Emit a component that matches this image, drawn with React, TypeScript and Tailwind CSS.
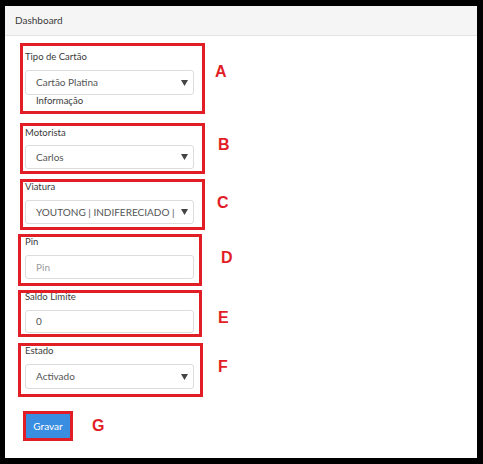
import React from "react";

const Arrow = () => (
  <svg width="7" height="6" viewBox="0 0 7 6" className="shrink-0">
    <path d="M0 0 H7 L3.5 6 Z" fill="#444" />
  </svg>
);

const Letter = ({ ch, cls }: { ch: string; cls: string }) => (
  <div
    className={`text-[16px] leading-[16px] font-bold text-[#e11d25] ${cls}`}
    style={{ fontFamily: "'Liberation Sans', Arial, sans-serif" }}
  >
    {ch}
  </div>
);

const Label = ({ text, cls }: { text: string; cls: string }) => (
  <div className={`h-[14px] leading-[14px] text-[9.5px] text-[#3a3a3a] ${cls}`}>{text}</div>
);

const Select = ({ value, h, cls }: { value: string; h: string; cls: string }) => (
  <div
    className={`w-[169px] ${h} ${cls} border border-[#dcdcdc] rounded-[3px] bg-white flex items-center pl-[10px] pr-[5px]`}
  >
    <div className="flex-1 min-w-0 whitespace-nowrap text-[10px] text-[#555] mr-[6px]">{value}</div>
    <Arrow />
  </div>
);

const Input = ({ value, placeholder, h, cls }: { value: string; placeholder?: boolean; h: string; cls: string }) => (
  <div
    className={`w-[169px] ${h} ${cls} border border-[#dcdcdc] rounded-[3px] bg-white flex items-center pl-[10px]`}
  >
    <span className={`text-[10px] ${placeholder ? "text-[#9a9a9a]" : "text-[#555]"}`}>{value}</span>
  </div>
);

export default function App() {
  return (
    <div
      className="w-[483px] h-[464px] bg-black pt-[6px] pl-[5px] pr-[6px] pb-[6px]"
      style={{ fontFamily: "Lato, 'Open Sans', sans-serif" }}
    >
      <div className="bg-white h-full flex flex-col">
        <div className="h-[30px] shrink-0 bg-[#f5f5f5] border-b border-[#e3e3e3] flex items-center pl-[10px] text-[10px] text-[#3a3a3a]">
          Dashboard
        </div>
        <div className="flex flex-col">
          {/* A */}
          <div className="flex items-start mt-[7px] ml-[15px]">
            <div className="w-[185px] h-[71px] border-[3px] border-[#e11d25] pl-[2px] pt-[4px]">
              <Label text="Tipo de Cartão" cls="" />
              <Select value="Cartão Platina" h="h-[25px]" cls="mt-[6px]" />
              <div className="h-[12px] leading-[12px] text-[9.5px] text-[#3a3a3a] pl-[11px]">Informação</div>
            </div>
            <Letter ch="A" cls="ml-[10px] mt-[21px]" />
          </div>
          {/* B */}
          <div className="flex items-start mt-[9px] ml-[15px]">
            <div className="w-[185px] h-[51px] border-[3px] border-[#e11d25] pl-[2px]">
              <Label text="Motorista" cls="" />
              <Select value="Carlos" h="h-[24px]" cls="mt-[5px]" />
            </div>
            <Letter ch="B" cls="ml-[13px] mt-[14px]" />
          </div>
          {/* C */}
          <div className="flex items-start mt-[5px] ml-[15px]">
            <div className="w-[185px] h-[51px] border-[3px] border-[#e11d25] pl-[2px]">
              <Label text="Viatura" cls="-mt-[2px]" />
              <Select value="YOUTONG | INDIFERECIADO |" h="h-[24px]" cls="mt-[6px]" />
            </div>
            <Letter ch="C" cls="ml-[12px] mt-[16px]" />
          </div>
          {/* D */}
          <div className="flex items-start mt-[4px] ml-[13px]">
            <div className="w-[184px] h-[52px] border-[3px] border-[#e11d25] pl-[4px]">
              <Label text="Pin" cls="-mt-[2px]" />
              <Input value="Pin" placeholder h="h-[24px]" cls="mt-[6px]" />
            </div>
            <Letter ch="D" cls="ml-[19px] mt-[16px]" />
          </div>
          {/* E */}
          <div className="flex items-start mt-[4px] ml-[13px]">
            <div className="w-[184px] h-[47px] border-[3px] border-[#e11d25] pl-[4px]">
              <Label text="Saldo Limite" cls="-mt-[3px]" />
              <Input value="0" h="h-[23px]" cls="mt-[6px]" />
            </div>
            <Letter ch="E" cls="ml-[16px] mt-[20px]" />
          </div>
          {/* F */}
          <div className="flex items-start mt-[6px] ml-[13px]">
            <div className="w-[185px] h-[54px] border-[3px] border-[#e11d25] pl-[4px]">
              <Label text="Estado" cls="-mt-[2px]" />
              <Select value="Activado" h="h-[25px]" cls="mt-[6px]" />
            </div>
            <Letter ch="F" cls="ml-[15px] mt-[16px]" />
          </div>
          {/* G */}
          <div className="flex items-start mt-[14px] ml-[18px]">
            <div className="w-[50px] h-[30px] border-[3px] border-[#e11d25]">
              <div className="w-full h-full bg-[#3a8ee2] flex items-center justify-center text-white text-[10px]">
                Gravar
              </div>
            </div>
            <Letter ch="G" cls="ml-[19px] mt-[7px]" />
          </div>
        </div>
      </div>
    </div>
  );
}
